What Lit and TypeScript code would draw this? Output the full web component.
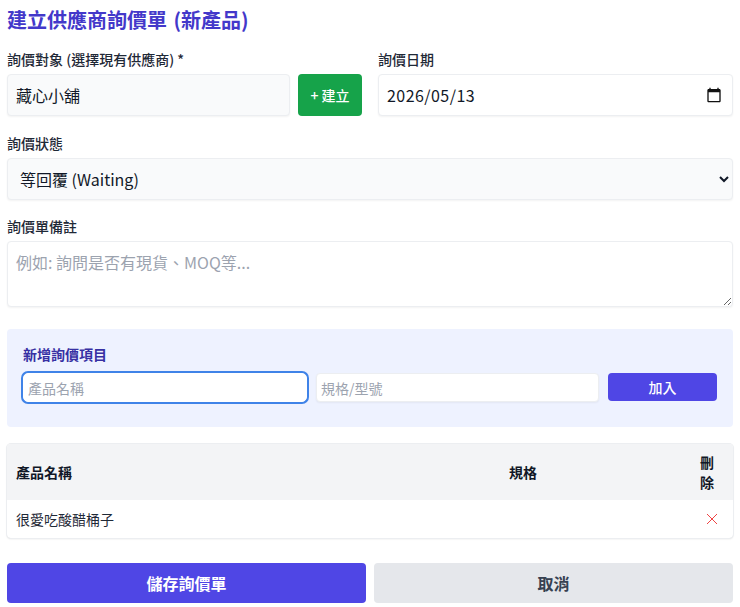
import { LitElement, html, css } from 'lit';
import { customElement, state } from 'lit/decorators.js';

interface QuoteItem {
  name: string;
  spec: string;
}

@customElement('app-root')
export class AppRoot extends LitElement {
  static styles = css`
    :host {
      display: block;
      box-sizing: border-box;
      width: 740px;
      height: 607px;
      padding: 6px 7px 0 7px;
      background: #fff;
      color: #111827;
      font-family: 'Noto Sans CJK TC', 'Noto Sans', sans-serif;
      overflow: hidden;
    }
    * {
      box-sizing: border-box;
    }
    h2 {
      margin: 0 0 15px 0;
      font-size: 20px;
      line-height: 28px;
      font-weight: 700;
      word-spacing: 2px;
      color: #4338ca;
    }
    .field {
      display: flex;
      flex-direction: column;
      margin-bottom: 16px;
    }
    .top-row .field {
      margin-bottom: 17px;
    }
    label {
      display: block;
      font-size: 14px;
      line-height: 20px;
      font-weight: 500;
      color: #1f2937;
      margin-bottom: 5px;
    }
    .top-row {
      display: grid;
      grid-template-columns: 355px 355px;
      column-gap: 16px;
    }
    .supplier {
      display: flex;
      gap: 8px;
    }
    input,
    select,
    textarea,
    .date {
      font-family: inherit;
      font-size: 16px;
      color: #111827;
      border: 1px solid #eceef1;
      border-radius: 4px;
      background: #fff;
      box-shadow: 0 1px 2px rgba(0, 0, 0, 0.05);
      outline: none;
      margin: 0;
    }
    .control {
      width: 100%;
      height: 42px;
      padding: 0 8px;
    }
    .muted {
      background: #f9fafb;
    }
    .supplier .control {
      flex: 1;
      min-width: 0;
    }
    .date {
      display: flex;
      align-items: center;
      justify-content: space-between;
      padding: 0 10px 0 8px;
      letter-spacing: 0.45px;
    }
    .date svg {
      display: block;
    }
    .btn-new {
      flex: none;
      width: 64px;
      height: 42px;
      border: none;
      border-radius: 4px;
      background: #16a34a;
      color: #fff;
      font: 500 14px 'Noto Sans CJK TC', sans-serif;
    }
    textarea {
      display: block;
      width: 100%;
      height: 66px;
      padding: 8px;
      line-height: 24px;
    }
    ::placeholder {
      color: #9ca3af;
      opacity: 1;
    }
    .panel {
      margin-top: 22px;
      height: 98px;
      padding: 15px 16px;
      border-radius: 4px;
      background: #eef2ff;
    }
    .panel h3 {
      margin: 0 0 9px 0;
      font-size: 14px;
      line-height: 20px;
      font-weight: 600;
      color: #3730a3;
    }
    .add-row {
      display: grid;
      grid-template-columns: 284px 283px 109px;
      column-gap: 9px;
      align-items: start;
    }
    .add-row input {
      width: 100%;
      height: 29px;
      padding: 0 4px;
      font-size: 14px;
    }
    .add-row input.focused {
      border-color: #fff;
      border-radius: 5px;
      box-shadow: 0 0 0 2px #3f83e8;
    }
    .btn-add {
      height: 28px;
      border: none;
      border-radius: 4px;
      background: #4f46e5;
      color: #fff;
      font: 500 14px 'Noto Sans CJK TC', sans-serif;
    }
    .table-wrap {
      margin-top: 17px;
      border-radius: 4px;
      overflow: hidden;
      box-shadow: 0 0 0 1px #eceef1, 0 1px 2px rgba(0, 0, 0, 0.12);
    }
    table {
      width: 100%;
      border-collapse: collapse;
      table-layout: fixed;
      font-size: 14px;
    }
    th {
      height: 56px;
      padding: 0 9px;
      background: #f3f4f6;
      font-weight: 700;
      text-align: left;
      line-height: 20px;
      color: #111827;
    }
    th.del {
      text-align: center;
      padding: 0 18px;
    }
    td {
      height: 38px;
      padding: 0 9px;
      color: #1f2937;
    }
    td.del {
      padding: 0 0 0 9px;
    }
    .x {
      display: block;
      margin: 0 auto;
    }
    .actions {
      display: grid;
      grid-template-columns: 1fr 1fr;
      column-gap: 8px;
      margin-top: 25px;
    }
    .actions button {
      height: 40px;
      border: none;
      border-radius: 4px;
      font: 700 16px 'Noto Sans CJK TC', sans-serif;
    }
    .save {
      background: #4f46e5;
      color: #fff;
    }
    .cancel {
      background: #e5e7eb;
      color: #374151;
    }
  `;

  @state() items: QuoteItem[] = [{ name: '很愛吃酸醋桶子', spec: '' }];

  render() {
    return html`
      <h2>建立供應商詢價單 (新產品)</h2>
      <div class="top-row">
        <div class="field">
          <label>詢價對象 (選擇現有供應商) *</label>
          <div class="supplier">
            <input class="control muted" type="text" .value=${'藏心小舖'} />
            <button class="btn-new">+ 建立</button>
          </div>
        </div>
        <div class="field">
          <label>詢價日期</label>
          <div class="control date">
            <span>2026/05/13</span>
            <svg width="16" height="16" viewBox="0 0 24 24" fill="#111">
              <path d="M20 3h-1V1h-2v2H7V1H5v2H4c-1.1 0-2 .9-2 2v16c0 1.1.9 2 2 2h16c1.1 0 2-.9 2-2V5c0-1.1-.9-2-2-2zm0 18H4V8h16v13z" />
            </svg>
          </div>
        </div>
      </div>
      <div class="field">
        <label>詢價狀態</label>
        <select class="control muted">
          <option>等回覆 (Waiting)</option>
        </select>
      </div>
      <div class="field">
        <label>詢價單備註</label>
        <textarea placeholder="例如: 詢問是否有現貨、MOQ等..."></textarea>
      </div>
      <section class="panel">
        <h3>新增詢價項目</h3>
        <div class="add-row">
          <input class="focused" type="text" placeholder="產品名稱" />
          <input type="text" placeholder="規格/型號" />
          <button class="btn-add">加入</button>
        </div>
      </section>
      <div class="table-wrap">
        <table>
          <colgroup>
            <col style="width:493px" />
            <col />
            <col style="width:52px" />
          </colgroup>
          <thead>
            <tr>
              <th>產品名稱</th>
              <th>規格</th>
              <th class="del">刪除</th>
            </tr>
          </thead>
          <tbody>
            ${this.items.map(
              (item) => html`
                <tr>
                  <td>${item.name}</td>
                  <td>${item.spec}</td>
                  <td class="del">
                    <svg class="x" width="12" height="12" viewBox="0 0 12 12" fill="none" stroke="#ef4444" stroke-width="1">
                      <path d="M1 1l10 10M11 1L1 11" />
                    </svg>
                  </td>
                </tr>
              `
            )}
          </tbody>
        </table>
      </div>
      <div class="actions">
        <button class="save">儲存詢價單</button>
        <button class="cancel">取消</button>
      </div>
    `;
  }
}
